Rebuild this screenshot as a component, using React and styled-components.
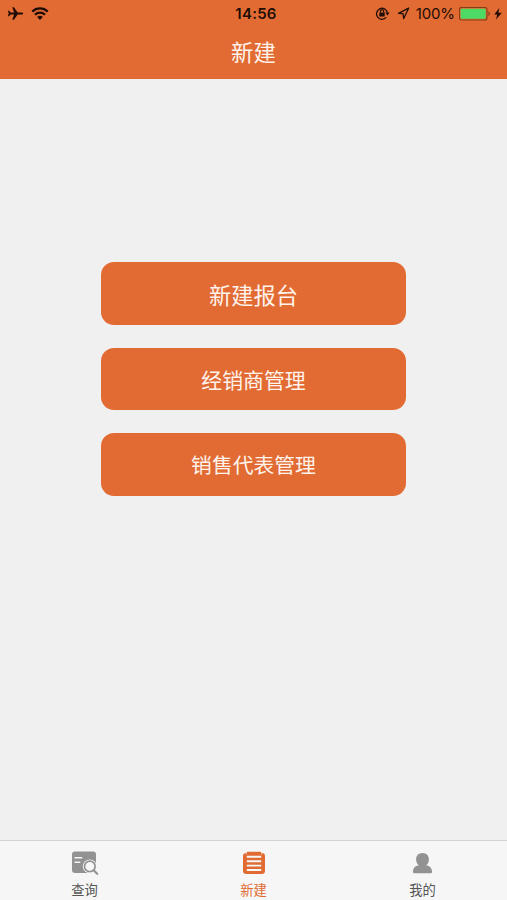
import React from "react";
import styled, { createGlobalStyle } from "styled-components";

const GlobalStyle = createGlobalStyle`
  * { box-sizing: border-box; }
  body { margin: 0; background: #f0f0f0; }
`;

const Screen = styled.div`
  display: flex;
  flex-direction: column;
  width: 100%;
  height: 100vh;
  overflow: hidden;
  background: #f0f0f0;
  font-family: "Noto Sans CJK SC", sans-serif;
`;

const Header = styled.header`
  flex: none;
  height: 79px;
  background: #e16b33;
`;

const StatusBar = styled.div`
  display: grid;
  grid-template-columns: 1fr auto 1fr;
  align-items: center;
  height: 27px;
  padding: 0 5px 0 7px;
  color: #210d05;
  font-family: Inter, sans-serif;
`;

const StatusGroup = styled.div`
  display: flex;
  align-items: center;
  justify-content: ${(p) => (p.$end ? "flex-end" : "flex-start")};
  svg { display: block; flex: none; }
`;

const Clock = styled.time`
  font-size: 15px;
  line-height: 27px;
  font-weight: 600;
  letter-spacing: 0.25px;
  margin-left: 3px;
`;

const Percent = styled.span`
  margin: 0 4px 0 6px;
  font-size: 15px;
  line-height: 27px;
  letter-spacing: -0.1px;
`;

const Title = styled.h1`
  margin: 0;
  height: 52px;
  font-size: 22.4px;
  font-weight: 400;
  line-height: 48px;
  text-align: center;
  color: #fff3ec;
`;

const Menu = styled.main`
  flex: 1;
  display: flex;
  flex-direction: column;
  align-items: center;
  gap: 22.6px;
  padding-top: 183.4px;
`;

const MenuButton = styled.button`
  width: 305.5px;
  height: 62.7px;
  padding: 0;
  border: 0;
  border-radius: 13px;
  background: #e16b33;
  color: #fff3ec;
  font-family: inherit;
  font-size: ${(p) => p.$size}px;
  line-height: 62px;
  text-align: center;
`;

const TabBar = styled.nav`
  flex: none;
  display: grid;
  grid-template-columns: repeat(3, 1fr);
  height: 60px;
  border-top: 1px solid #d3d3d3;
  background: #f6f6f6;
`;

const Tab = styled.a`
  display: flex;
  flex-direction: column;
  align-items: center;
  padding-top: 9px;
  color: ${(p) => (p.$active ? "#e16b33" : "#555555")};
  svg { display: block; flex: none; }
`;

const TabLabel = styled.span`
  margin-top: 5px;
  font-size: 13.3px;
  line-height: 20px;
`;

const PlaneIcon = () => (
  <svg width="17" height="16" viewBox="0 0 17 16" fill="currentColor">
    <path d="M16.2 7.5c0-.7-.8-1.1-1.8-1.1h-3.7L6.9 1.2H5.3l1.8 5.2H3.6L2.1 4.7H.9l.8 2.8-.8 2.8h1.2l1.5-1.7h3.5l-1.8 5.2h1.6l3.8-5.2h3.7c1 0 1.8-.4 1.8-1.1z" />
  </svg>
);

const WifiIcon = () => (
  <svg width="18" height="14" viewBox="0 0 18 14" fill="none" stroke="currentColor" strokeWidth="2.3">
    <path d="M1.3 4.6a11 11 0 0 1 15.4 0M4 7.7a7.1 7.1 0 0 1 10 0" />
    <path d="M9 13 6.1 10.1a4.1 4.1 0 0 1 5.8 0z" fill="currentColor" stroke="none" />
  </svg>
);

const RotationLockIcon = () => (
  <svg width="15" height="14" viewBox="0 0 15 14" fill="none" stroke="currentColor">
    <path d="M11.2 10.4A5.5 5.5 0 1 1 12.4 5.5" strokeWidth="1.3" />
    <path d="M10.2 5.5h4.4l-2.2 3z" fill="currentColor" stroke="none" />
    <path d="M5.3 5.7V4.6a1.7 1.7 0 0 1 3.4 0v1.1" strokeWidth="1.1" />
    <rect x="4.3" y="5.5" width="5.4" height="4" rx=".4" fill="currentColor" stroke="none" />
  </svg>
);

const LocationIcon = () => (
  <svg width="13" height="13" viewBox="0 0 13 13" fill="none" stroke="currentColor" strokeWidth="1.3" strokeLinejoin="round">
    <path d="M11.6 1.2 1.5 6.3l4.5.3.7 4.9z" />
  </svg>
);

const BatteryIcon = () => (
  <svg width="32" height="14" viewBox="0 0 32 14">
    <rect x=".4" y=".4" width="27.6" height="12.6" rx="2.3" fill="none" stroke="#873c16" strokeWidth="1.1" />
    <rect x="1.7" y="1.7" width="25" height="10" rx="1" fill="#4cd964" />
    <path d="M29.4 4.5c2 .6 2 3.8 0 4.4z" fill="#873c16" />
  </svg>
);

const BoltIcon = () => (
  <svg width="8" height="12" viewBox="0 0 8 12" fill="currentColor">
    <path d="M5.4 0 .2 6.6h3L2 11.6l5.8-6.9H4.4z" />
  </svg>
);

const QueryIcon = () => (
  <svg width="28" height="25" viewBox="0 0 28 25">
    <rect x="1" y="1.5" width="24" height="21.5" rx="3" fill="#929292" />
    <path d="M3.5 7.8h7.8M3.5 12.2h5.8" stroke="#f6f6f6" strokeWidth="1.6" />
    <circle cx="18.8" cy="16.4" r="7" fill="#f6f6f6" />
    <path d="m22 20 5.3 4.4" stroke="#f6f6f6" strokeWidth="5" />
    <circle cx="18.8" cy="16.4" r="5.3" fill="none" stroke="#929292" strokeWidth="1.7" />
    <path d="m22.6 20.3 3.6 3.5" stroke="#929292" strokeWidth="2.2" strokeLinecap="round" />
  </svg>
);

const FormIcon = () => (
  <svg width="24" height="25" viewBox="0 0 24 25">
    <rect x="1" y="3" width="22" height="20.9" rx="3.2" fill="#e16b33" />
    <rect x="4.6" y="1.8" width="14.8" height="4" rx="1.2" fill="#e16b33" />
    <path d="M4.3 2.8v1.8M19.7 2.8v1.8" stroke="#f6f6f6" strokeWidth=".6" />
    <path d="M4.8 6.8h14.4M4.8 11.2h14.4M4.8 15.6h14.4M4.8 20h14.4" stroke="#f6f6f6" strokeWidth="1.9" />
  </svg>
);

const PersonIcon = () => (
  <svg width="22" height="25" viewBox="0 0 22 25" fill="#929292">
    <path d="M10.5 3c4 0 6.4 2.8 6.4 6.4 0 2.5-1.1 4.7-2.8 5.8 3.7.8 5.8 2.5 6 6.6.1.9-.3 1.4-1.1 1.4H2c-.8 0-1.2-.5-1.1-1.4.2-4.1 2.3-5.8 6-6.6-1.7-1.1-2.8-3.3-2.8-5.8C4.1 5.8 6.5 3 10.5 3z" />
  </svg>
);

const Gap = styled.span`
  flex: none;
  width: ${(p) => p.$w}px;
`;

const actions = [
  { label: "新建报台", size: 22.3 },
  { label: "经销商管理", size: 20.9 },
  { label: "销售代表管理", size: 20.8 },
];

export default function App() {
  return (
    <Screen>
      <GlobalStyle />
      <Header>
        <StatusBar>
          <StatusGroup>
            <PlaneIcon />
            <Gap $w={7} />
            <WifiIcon />
          </StatusGroup>
          <Clock>14:56</Clock>
          <StatusGroup $end>
            <RotationLockIcon />
            <Gap $w={7} />
            <LocationIcon />
            <Percent>100%</Percent>
            <BatteryIcon />
            <Gap $w={3} />
            <BoltIcon />
          </StatusGroup>
        </StatusBar>
        <Title>新建</Title>
      </Header>
      <Menu>
        {actions.map((a) => (
          <MenuButton key={a.label} $size={a.size}>{a.label}</MenuButton>
        ))}
      </Menu>
      <TabBar>
        <Tab>
          <QueryIcon />
          <TabLabel>查询</TabLabel>
        </Tab>
        <Tab $active>
          <FormIcon />
          <TabLabel>新建</TabLabel>
        </Tab>
        <Tab>
          <PersonIcon />
          <TabLabel>我的</TabLabel>
        </Tab>
      </TabBar>
    </Screen>
  );
}
